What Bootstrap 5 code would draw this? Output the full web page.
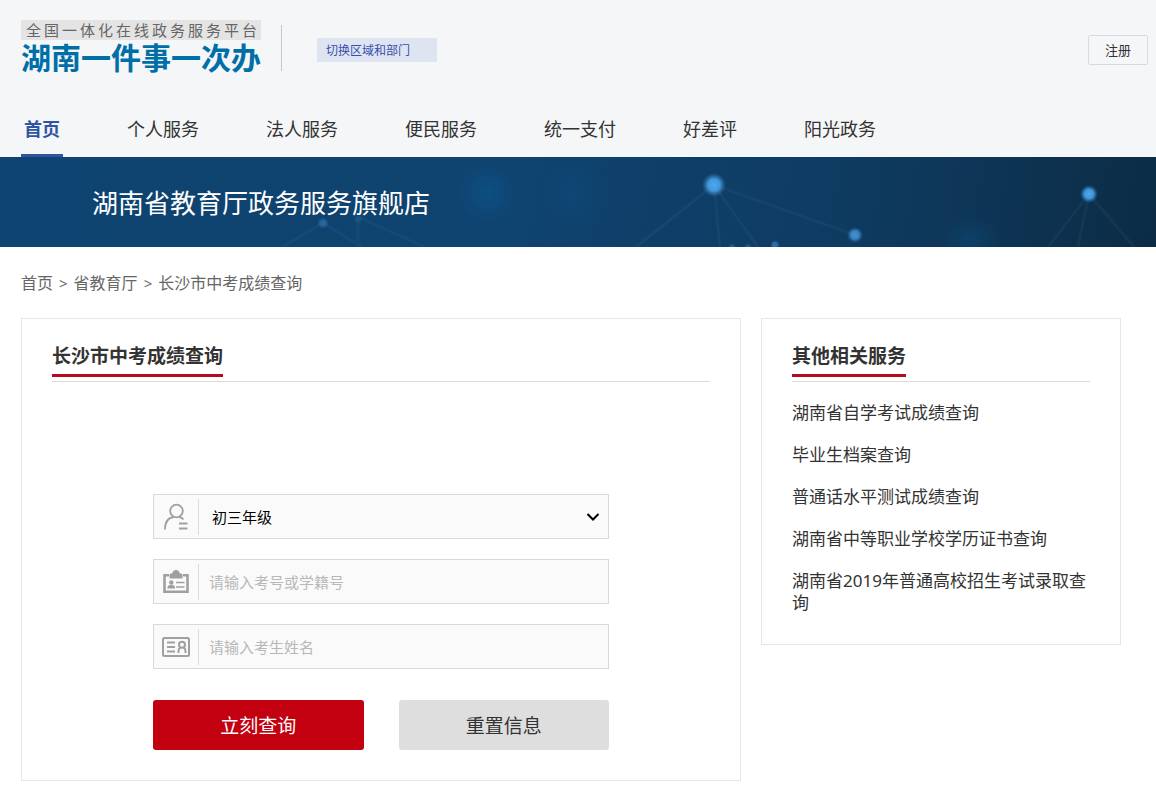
<!DOCTYPE html>
<html lang="zh-CN">
<head>
<meta charset="utf-8">
<meta name="viewport" content="width=device-width, initial-scale=1">
<title>长沙市中考成绩查询</title>
<link href="https://cdn.jsdelivr.net/npm/bootstrap@5.3.0/dist/css/bootstrap.min.css" rel="stylesheet">
<style>
  body { font-family: "Noto Sans CJK SC", sans-serif; color: #333; background: #fff; }
  a { color: inherit; text-decoration: none; }
  a:hover { color: #2c4f9e; }

  .site-header { background: #f5f6f8; }
  .header-top { padding: 20px 8px 0 21px; height: 102px; }
  .brand { width: 240px; }
  .brand-sub { background: #e4e4e4; color: #666; font-size: 15px; line-height: 20px; padding: 0 4px 0 5px; text-align-last: justify; }
  .brand-name { color: #006fa8; font-size: 30px; line-height: 32px; font-weight: 700; white-space: nowrap; }
  .brand-rule { width: 1px; height: 46px; margin: 5px 35px 0 20px; background: #c3c6cd; }
  .region-btn { width: 120px; height: 24px; margin-top: 18px; padding: 0 9px; border: 0; background: #dfe4f1; color: #3350ad; font-size: 12px; line-height: 24px; text-align: left; }
  .register-btn { width: 60px; height: 30px; margin-top: 15px; padding: 0; border: 1px solid #d6dae2; border-radius: 2px; background: transparent; color: #333; font-size: 13px; line-height: 28px; }

  .main-nav { padding: 0 21px; gap: 0 61px; }
  .main-nav .nav-link { padding: 13px 3px; border-bottom: 3px solid transparent; color: #333; font-size: 18px; line-height: 26px; }
  .main-nav .nav-link.active { color: #2f55a0; border-color: #2f55a0; font-weight: 700; }

  .banner { height: 90px; padding: 0 92px; background: linear-gradient(100deg, #0e4471 0%, #0f4370 45%, #0e3a5f 75%, #0c2c45 100%); }
  .banner-art { position: absolute; inset: 0; width: 100%; height: 100%; }
  .banner h1 { position: relative; margin: 0; color: #fff; font-size: 26px; line-height: 36px; font-weight: 400; }

  .content-area { padding: 0 35px 24px 21px; }
  .crumbs { padding: 23px 0 24px; gap: 6px; color: #666; font-size: 16px; line-height: 24px; }
  .crumbs .sep { font-family: "Noto Sans", sans-serif; font-size: 15px; line-height: 26px; height: 24px; }
  .panels { display: grid; grid-template-columns: 2fr 1fr; gap: 20px; align-items: start; }
  .panel { border: 1px solid #e6e6e6; padding: 20px 30px 30px; }
  .panel-head { border-bottom: 1px solid #dcdcdc; padding-bottom: 4px; }
  .panel-head h2 { display: inline-block; margin: 0; padding: 2px 0 5px; border-bottom: 3px solid #b70a21; font-size: 19px; line-height: 28px; font-weight: 700; vertical-align: top; }

  .query-form { max-width: 456px; margin: 112px auto 0; }
  .field { height: 45px; margin-bottom: 20px; border: 1px solid #d9d9d9; background: #fafafa; }
  .field label { flex: 0 0 45px; height: 36px; border-right: 1px solid #dcdcdc; color: #a0a0a0; }
  .field .form-control, .field .form-select { height: 43px; border: 0; border-radius: 0; background-color: transparent; font-size: 15px; line-height: 24px; box-shadow: none; }
  .field .form-control { padding: 0 10px; }
  .field .form-control::placeholder { color: #b8b8b8; }
  .field .form-select { padding: 0 32px 0 13px; color: #000; background-image: url("data:image/svg+xml,%3Csvg xmlns='http://www.w3.org/2000/svg' viewBox='0 0 14 10'%3E%3Cpath d='M1.5 2L7 7.5L12.500 2' fill='none' stroke='%23000' stroke-width='2'/%3E%3C/svg%3E"); background-size: 14px 10px; background-position: right 8px center; }
  .actions { gap: 35px; padding-top: 11px; }
  .actions .btn { flex: 1; height: 50px; padding: 0; border: 0; border-radius: 3px; font-size: 19px; }
  .btn-query, .btn-query:hover { background: #c3000f; color: #fff; }
  .btn-clear, .btn-clear:hover { background: #dedede; color: #333; }

  .related { display: grid; gap: 20px; margin: 20px 0 0; font-family: "Noto Sans", "Noto Sans CJK SC", sans-serif; font-size: 17px; line-height: 22px; }
</style>
</head>
<body>
<header class="site-header">
  <div class="header-top d-flex align-items-start">
    <div class="brand">
      <div class="brand-sub">全国一体化在线政务服务平台</div>
      <div class="brand-name">湖南一件事一次办</div>
    </div>
    <div class="brand-rule"></div>
    <button type="button" class="region-btn">切换区域和部门</button>
    <button type="button" class="register-btn ms-auto">注册</button>
  </div>
  <nav class="nav main-nav" aria-label="主导航">
    <a class="nav-link active" href="#" aria-current="page">首页</a>
    <a class="nav-link" href="#">个人服务</a>
    <a class="nav-link" href="#">法人服务</a>
    <a class="nav-link" href="#">便民服务</a>
    <a class="nav-link" href="#">统一支付</a>
    <a class="nav-link" href="#">好差评</a>
    <a class="nav-link" href="#">阳光政务</a>
  </nav>
</header>

<section class="banner position-relative overflow-hidden d-flex align-items-center">
  <svg class="banner-art" viewBox="0 0 1156 90" preserveAspectRatio="xMidYMid slice" aria-hidden="true">
    <defs>
      <radialGradient id="node"><stop offset="0" stop-color="#4ca6ee"/><stop offset=".5" stop-color="#459ce2" stop-opacity=".95"/><stop offset="1" stop-color="#2d78b5" stop-opacity="0"/></radialGradient>
      <radialGradient id="haze"><stop offset="0" stop-color="#0b5a94" stop-opacity=".5"/><stop offset="1" stop-color="#0b5a94" stop-opacity="0"/></radialGradient>
    </defs>
    <circle cx="487" cy="36" r="32" fill="url(#haze)"/>
    <circle cx="574" cy="36" r="32" fill="url(#haze)" opacity=".4"/>
    <ellipse cx="970" cy="83" rx="32" ry="24" fill="url(#haze)" opacity=".6"/>
    <g stroke="#5d8cae" stroke-opacity=".09" stroke-width="3" fill="none">
      <path d="M714 28L636 90M714 28L720 90M714 28L758 90M714 28L855 78M1089 37L1048 90M1089 37L1078 90M1089 37L1134 90M323 66L282 90M323 66L362 90M358 60V90M358 60L425 90"/>
    </g>
    <g fill="url(#node)">
      <circle cx="714" cy="28" r="12"/>
      <circle cx="1089" cy="37" r="9"/>
      <circle cx="855" cy="78" r="8" opacity=".8"/>
      <circle cx="323" cy="66" r="6" opacity=".35"/>
      <circle cx="358" cy="62" r="5" opacity=".15"/>
      <circle cx="775" cy="88" r="5" opacity=".5"/>
      <circle cx="748" cy="90" r="4" opacity=".3"/>
      <circle cx="732" cy="90" r="4" opacity=".3"/>
    </g>
  </svg>
  <h1>湖南省教育厅政务服务旗舰店</h1>
</section>

<main class="content-area">
  <nav class="crumbs d-flex flex-wrap" aria-label="面包屑">
    <a href="#">首页</a><span class="sep">&gt;</span>
    <a href="#">省教育厅</a><span class="sep">&gt;</span>
    <span>长沙市中考成绩查询</span>
  </nav>

  <div class="panels">
    <section class="panel">
      <div class="panel-head"><h2>长沙市中考成绩查询</h2></div>
      <form class="query-form">
        <div class="field d-flex align-items-center">
          <label for="grade" class="d-flex align-items-center justify-content-center" aria-label="年级">
            <svg width="26" height="28" viewBox="0 0 26 28" fill="none" stroke="currentColor" stroke-width="1.800"><circle cx="13.500" cy="8" r="6.300"/><path d="M2 26.500C2 19 5.500 14.500 11 14M16 14C18 14.300 19.500 15.200 20.500 16.500M16 20.500H24.500M16 25.500H24.500"/></svg>
          </label>
          <select id="grade" class="form-select"><option>初三年级</option></select>
        </div>
        <div class="field d-flex align-items-center">
          <label for="exam-no" class="d-flex align-items-center justify-content-center" aria-label="考号或学籍号">
            <svg width="26" height="24" viewBox="0 0 26 24" fill="none" stroke="currentColor"><path stroke-width="2.600" d="M6 5.300H1.500V21.700H24.500V5.300H20"/><path fill="currentColor" stroke="none" d="M6.500 8.500V5Q6.500 3.500 8 3.500H9Q10 0 13 0T17 3.500H18Q19.500 3.500 19.500 5V8.500ZM4.500 18.500V17Q4.500 15.500 7 15H9.500Q12 15.500 12 17V18.500Z"/><circle cx="8.300" cy="12.500" r="2.200" fill="currentColor" stroke="none"/><path stroke-width="1.700" d="M13 12.500H21.500M13 17H21.500"/></svg>
          </label>
          <input id="exam-no" type="text" class="form-control" placeholder="请输入考号或学籍号">
        </div>
        <div class="field d-flex align-items-center">
          <label for="student" class="d-flex align-items-center justify-content-center" aria-label="考生姓名">
            <svg width="28" height="20" viewBox="0 0 28 20" fill="none" stroke="currentColor" stroke-width="2"><rect x="1" y="1" width="26" height="18" rx="1.500"/><path d="M5 5.500H13M5 10H13M5 14.500H13M16.500 16V14Q16.500 11.500 18.500 10.500M21.500 10.500Q23.500 11.500 23.500 14V16"/><circle cx="20" cy="7.800" r="3"/></svg>
          </label>
          <input id="student" type="text" class="form-control" placeholder="请输入考生姓名">
        </div>
        <div class="actions d-flex">
          <button type="submit" class="btn btn-query">立刻查询</button>
          <button type="reset" class="btn btn-clear">重置信息</button>
        </div>
      </form>
    </section>

    <aside class="panel">
      <div class="panel-head"><h2>其他相关服务</h2></div>
      <ul class="related list-unstyled">
        <li><a href="#">湖南省自学考试成绩查询</a></li>
        <li><a href="#">毕业生档案查询</a></li>
        <li><a href="#">普通话水平测试成绩查询</a></li>
        <li><a href="#">湖南省中等职业学校学历证书查询</a></li>
        <li><a href="#">湖南省2019年普通高校招生考试录取查询</a></li>
      </ul>
    </aside>
  </div>
</main>
<script src="https://cdn.jsdelivr.net/npm/bootstrap@5.3.0/dist/js/bootstrap.bundle.min.js"></script>
</body>
</html>
